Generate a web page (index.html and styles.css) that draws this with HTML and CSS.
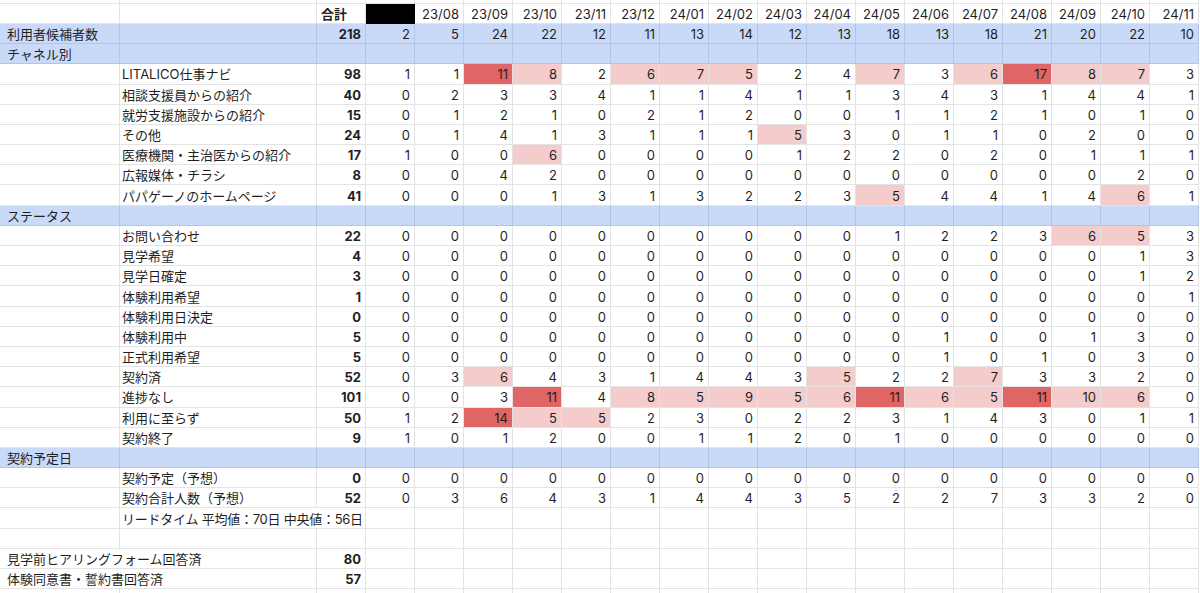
FILE: index.html
```html
<!DOCTYPE html>
<html lang="ja">
<head>
<meta charset="utf-8">
<title>利用者候補者数</title>
<link rel="stylesheet" href="styles.css">
</head>
<body>
<table class="sheet">
<colgroup><col class="ca"><col class="cb"><col class="cc"><col class="cm"><col class="cm"><col class="cm"><col class="cm"><col class="cm"><col class="cm"><col class="cm"><col class="cm"><col class="cm"><col class="cm"><col class="cm"><col class="cm"><col class="cm"><col class="cm"><col class="cm"><col class="cm"><col class="cm"></colgroup>
<tr class="sliver"><td></td><td></td><td></td><td></td><td></td><td></td><td></td><td></td><td></td><td></td><td></td><td></td><td></td><td></td><td></td><td></td><td></td><td></td><td></td><td></td></tr>
<tr class="hd"><td class="a"></td><td class="b"></td><td class="tl">合計</td><td class="k"></td><td>23/08</td><td>23/09</td><td>23/10</td><td>23/11</td><td>23/12</td><td>24/01</td><td>24/02</td><td>24/03</td><td>24/04</td><td>24/05</td><td>24/06</td><td>24/07</td><td>24/08</td><td>24/09</td><td>24/10</td><td>24/11</td></tr>
<tr class="band"><td class="a">利用者候補者数</td><td class="b"></td><td class="t">218</td><td>2</td><td>5</td><td>24</td><td>22</td><td>12</td><td>11</td><td>13</td><td>14</td><td>12</td><td>13</td><td>18</td><td>13</td><td>18</td><td>21</td><td>20</td><td>22</td><td>10</td></tr>
<tr class="band"><td class="a">チャネル別</td><td class="b"></td><td class="t"></td><td></td><td></td><td></td><td></td><td></td><td></td><td></td><td></td><td></td><td></td><td></td><td></td><td></td><td></td><td></td><td></td><td></td></tr>
<tr><td class="a"></td><td class="b">LITALICO仕事ナビ</td><td class="t">98</td><td>1</td><td>1</td><td class="r">11</td><td class="p">8</td><td>2</td><td class="p">6</td><td class="p">7</td><td class="p">5</td><td>2</td><td>4</td><td class="p">7</td><td>3</td><td class="p">6</td><td class="r">17</td><td class="p">8</td><td class="p">7</td><td>3</td></tr>
<tr><td class="a"></td><td class="b">相談支援員からの紹介</td><td class="t">40</td><td>0</td><td>2</td><td>3</td><td>3</td><td>4</td><td>1</td><td>1</td><td>4</td><td>1</td><td>1</td><td>3</td><td>4</td><td>3</td><td>1</td><td>4</td><td>4</td><td>1</td></tr>
<tr><td class="a"></td><td class="b">就労支援施設からの紹介</td><td class="t">15</td><td>0</td><td>1</td><td>2</td><td>1</td><td>0</td><td>2</td><td>1</td><td>2</td><td>0</td><td>0</td><td>1</td><td>1</td><td>2</td><td>1</td><td>0</td><td>1</td><td>0</td></tr>
<tr><td class="a"></td><td class="b">その他</td><td class="t">24</td><td>0</td><td>1</td><td>4</td><td>1</td><td>3</td><td>1</td><td>1</td><td>1</td><td class="p">5</td><td>3</td><td>0</td><td>1</td><td>1</td><td>0</td><td>2</td><td>0</td><td>0</td></tr>
<tr><td class="a"></td><td class="b">医療機関・主治医からの紹介</td><td class="t">17</td><td>1</td><td>0</td><td>0</td><td class="p">6</td><td>0</td><td>0</td><td>0</td><td>0</td><td>1</td><td>2</td><td>2</td><td>0</td><td>2</td><td>0</td><td>1</td><td>1</td><td>1</td></tr>
<tr><td class="a"></td><td class="b">広報媒体・チラシ</td><td class="t">8</td><td>0</td><td>0</td><td>4</td><td>2</td><td>0</td><td>0</td><td>0</td><td>0</td><td>0</td><td>0</td><td>0</td><td>0</td><td>0</td><td>0</td><td>0</td><td>2</td><td>0</td></tr>
<tr><td class="a"></td><td class="b">パパゲーノのホームページ</td><td class="t">41</td><td>0</td><td>0</td><td>0</td><td>1</td><td>3</td><td>1</td><td>3</td><td>2</td><td>2</td><td>3</td><td class="p">5</td><td>4</td><td>4</td><td>1</td><td>4</td><td class="p">6</td><td>1</td></tr>
<tr class="band"><td class="a">ステータス</td><td class="b"></td><td class="t"></td><td></td><td></td><td></td><td></td><td></td><td></td><td></td><td></td><td></td><td></td><td></td><td></td><td></td><td></td><td></td><td></td><td></td></tr>
<tr><td class="a"></td><td class="b">お問い合わせ</td><td class="t">22</td><td>0</td><td>0</td><td>0</td><td>0</td><td>0</td><td>0</td><td>0</td><td>0</td><td>0</td><td>0</td><td>1</td><td>2</td><td>2</td><td>3</td><td class="p">6</td><td class="p">5</td><td>3</td></tr>
<tr><td class="a"></td><td class="b">見学希望</td><td class="t">4</td><td>0</td><td>0</td><td>0</td><td>0</td><td>0</td><td>0</td><td>0</td><td>0</td><td>0</td><td>0</td><td>0</td><td>0</td><td>0</td><td>0</td><td>0</td><td>1</td><td>3</td></tr>
<tr><td class="a"></td><td class="b">見学日確定</td><td class="t">3</td><td>0</td><td>0</td><td>0</td><td>0</td><td>0</td><td>0</td><td>0</td><td>0</td><td>0</td><td>0</td><td>0</td><td>0</td><td>0</td><td>0</td><td>0</td><td>1</td><td>2</td></tr>
<tr><td class="a"></td><td class="b">体験利用希望</td><td class="t">1</td><td>0</td><td>0</td><td>0</td><td>0</td><td>0</td><td>0</td><td>0</td><td>0</td><td>0</td><td>0</td><td>0</td><td>0</td><td>0</td><td>0</td><td>0</td><td>0</td><td>1</td></tr>
<tr><td class="a"></td><td class="b">体験利用日決定</td><td class="t">0</td><td>0</td><td>0</td><td>0</td><td>0</td><td>0</td><td>0</td><td>0</td><td>0</td><td>0</td><td>0</td><td>0</td><td>0</td><td>0</td><td>0</td><td>0</td><td>0</td><td>0</td></tr>
<tr><td class="a"></td><td class="b">体験利用中</td><td class="t">5</td><td>0</td><td>0</td><td>0</td><td>0</td><td>0</td><td>0</td><td>0</td><td>0</td><td>0</td><td>0</td><td>0</td><td>1</td><td>0</td><td>0</td><td>1</td><td>3</td><td>0</td></tr>
<tr><td class="a"></td><td class="b">正式利用希望</td><td class="t">5</td><td>0</td><td>0</td><td>0</td><td>0</td><td>0</td><td>0</td><td>0</td><td>0</td><td>0</td><td>0</td><td>0</td><td>1</td><td>0</td><td>1</td><td>0</td><td>3</td><td>0</td></tr>
<tr><td class="a"></td><td class="b">契約済</td><td class="t">52</td><td>0</td><td>3</td><td class="p">6</td><td>4</td><td>3</td><td>1</td><td>4</td><td>4</td><td>3</td><td class="p">5</td><td>2</td><td>2</td><td class="p">7</td><td>3</td><td>3</td><td>2</td><td>0</td></tr>
<tr><td class="a"></td><td class="b">進捗なし</td><td class="t">101</td><td>0</td><td>0</td><td>3</td><td class="r">11</td><td>4</td><td class="p">8</td><td class="p">5</td><td class="p">9</td><td class="p">5</td><td class="p">6</td><td class="r">11</td><td class="p">6</td><td class="p">5</td><td class="r">11</td><td class="p">10</td><td class="p">6</td><td>0</td></tr>
<tr><td class="a"></td><td class="b">利用に至らず</td><td class="t">50</td><td>1</td><td>2</td><td class="r">14</td><td class="p">5</td><td class="p">5</td><td>2</td><td>3</td><td>0</td><td>2</td><td>2</td><td>3</td><td>1</td><td>4</td><td>3</td><td>0</td><td>1</td><td>1</td></tr>
<tr><td class="a"></td><td class="b">契約終了</td><td class="t">9</td><td>1</td><td>0</td><td>1</td><td>2</td><td>0</td><td>0</td><td>1</td><td>1</td><td>2</td><td>0</td><td>1</td><td>0</td><td>0</td><td>0</td><td>0</td><td>0</td><td>0</td></tr>
<tr class="band"><td class="a">契約予定日</td><td class="b"></td><td class="t"></td><td></td><td></td><td></td><td></td><td></td><td></td><td></td><td></td><td></td><td></td><td></td><td></td><td></td><td></td><td></td><td></td><td></td></tr>
<tr><td class="a"></td><td class="b">契約予定（予想）</td><td class="t">0</td><td>0</td><td>0</td><td>0</td><td>0</td><td>0</td><td>0</td><td>0</td><td>0</td><td>0</td><td>0</td><td>0</td><td>0</td><td>0</td><td>0</td><td>0</td><td>0</td><td>0</td></tr>
<tr><td class="a"></td><td class="b">契約合計人数（予想）</td><td class="t">52</td><td>0</td><td>3</td><td>6</td><td>4</td><td>3</td><td>1</td><td>4</td><td>4</td><td>3</td><td>5</td><td>2</td><td>2</td><td>7</td><td>3</td><td>3</td><td>2</td><td>0</td></tr>
<tr><td class="a"></td><td class="b lead" colspan="2">リードタイム 平均値：70日 中央値：56日</td><td></td><td></td><td></td><td></td><td></td><td></td><td></td><td></td><td></td><td></td><td></td><td></td><td></td><td></td><td></td><td></td><td></td></tr>
<tr><td class="a"></td><td class="b"></td><td class="t"></td><td></td><td></td><td></td><td></td><td></td><td></td><td></td><td></td><td></td><td></td><td></td><td></td><td></td><td></td><td></td><td></td><td></td></tr>
<tr><td class="a" colspan="2">見学前ヒアリングフォーム回答済</td><td class="t">80</td><td></td><td></td><td></td><td></td><td></td><td></td><td></td><td></td><td></td><td></td><td></td><td></td><td></td><td></td><td></td><td></td><td></td></tr>
<tr><td class="a" colspan="2">体験同意書・誓約書回答済</td><td class="t">57</td><td></td><td></td><td></td><td></td><td></td><td></td><td></td><td></td><td></td><td></td><td></td><td></td><td></td><td></td><td></td><td></td><td></td></tr>
<tr><td class="a"></td><td class="b"></td><td class="t"></td><td></td><td></td><td></td><td></td><td></td><td></td><td></td><td></td><td></td><td></td><td></td><td></td><td></td><td></td><td></td><td></td><td></td></tr>
</table>
</body>
</html>
```

FILE: styles.css
```css
html, body {
  margin: 0;
  padding: 0;
  background: #ffffff;
  overflow: hidden;
}

body {
  font-family: Inter, "Noto Sans CJK JP", sans-serif;
  font-size: 13px;
  color: #1f1f1f;
}

.sheet {
  border-collapse: separate;
  border-spacing: 0;
  table-layout: fixed;
  width: 1199px;
}

.ca { width: 120px; }
.cb { width: 197px; }
.cc { width: 49px; }
.cm { width: 49px; }

.sheet tr {
  height: 20.2px;
}

.sheet tr.sliver {
  height: 3.8px;
}

.sheet td {
  border-right: 1px solid #e3e3e3;
  border-bottom: 1px solid #e3e3e3;
  padding: 1px 4px 0 2px;
  line-height: 16px;
  text-align: right;
  white-space: nowrap;
  overflow: hidden;
  vertical-align: middle;
}

.sheet tr.sliver td {
  padding: 0;
  line-height: 0;
}

.sheet td.a {
  text-align: left;
  padding-left: 7px;
}

.sheet td.b {
  text-align: left;
  padding-left: 2px;
}

.sheet td.lead {
  padding-right: 0;
  letter-spacing: -0.25px;
  overflow: visible;
}

.sheet td.t {
  font-weight: 700;
}

.sheet td.tl {
  font-weight: 700;
  text-align: left;
  padding-left: 4px;
}

.sheet td.k {
  background: #000000;
  border-color: #000000;
}

.sheet tr.band td {
  background: #c9daf8;
  border-right-color: #b3c5e6;
  border-bottom-color: #b3c5e6;
}

.sheet td.p {
  background: #f4cccc;
}

.sheet td.r {
  background: #e06666;
}
```
